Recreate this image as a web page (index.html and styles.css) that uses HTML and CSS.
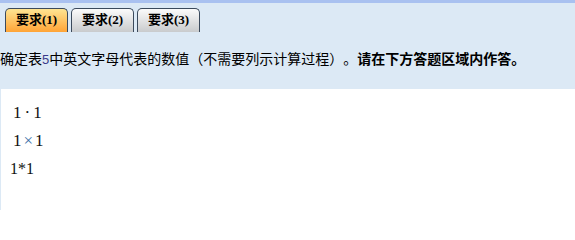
FILE: index.html
```html
<!DOCTYPE html>
<html>
<head>
<meta charset="utf-8">
<link rel="stylesheet" href="styles.css">
</head>
<body>
<div class="topbar"></div>
<div class="header">
  <div class="tabs">
    <div class="tab active">要求<span class="paren">(1)</span></div>
    <div class="tab">要求<span class="paren">(2)</span></div>
    <div class="tab">要求<span class="paren">(3)</span></div>
  </div>
  <p class="question">确定表<span class="num">5</span>中英文字母代表的数值（不需要列示计算过程）。<b>请在下方答题区域内作答。</b></p>
</div>
<div class="answer">
  <div class="math">1<span class="op">·</span>1</div>
  <div class="math">1<span class="op times">×</span>1</div>
  <div class="plain">1*1</div>
</div>
</body>
</html>
```

FILE: styles.css
```css
html, body {
  margin: 0;
  padding: 0;
  background: #ffffff;
}
body {
  width: 575px;
  height: 210px;
  background: #dce9f5;
  font-family: "Liberation Serif", "Noto Sans CJK SC", serif;
  overflow: hidden;
}
.topbar {
  height: 3px;
  background: #a9c1f0;
}
.header {
  height: 86px;
  display: flex;
  flex-direction: column;
}
.tabs {
  display: flex;
  gap: 3px;
  padding: 5px 0 0 5px;
}
.tab {
  width: 61px;
  height: 23px;
  border: 1px solid #3b4a5c;
  border-bottom: none;
  border-radius: 5px 5px 0 0;
  background: linear-gradient(#fbfbfb, #c9cbcd);
  font-family: "Noto Sans CJK SC", sans-serif;
  font-weight: bold;
  font-size: 13px;
  line-height: 20px;
  text-align: center;
  color: #000;
}
.tab .paren {
  font-family: "Liberation Serif", serif;
  font-size: 13px;
}
.tab.active {
  background: linear-gradient(#ffe592, #ffa436);
}
.question {
  margin: 16px 0 0 0;
  font-family: "Noto Sans CJK SC", sans-serif;
  font-size: 14px;
  line-height: 20px;
  color: #000;
  text-spacing-trim: space-all;
}
.question .num {
  font-family: "Liberation Sans", sans-serif;
  font-size: 13px;
  color: #3a3a8a;
}
.answer {
  margin-left: 1px;
  height: 121px;
  background: #ffffff;
  padding-top: 10px;
  box-sizing: border-box;
}
.math {
  font-family: "Liberation Serif", serif;
  font-size: 17px;
  line-height: 28px;
  padding-left: 12px;
  color: #111;
}
.op {
  margin: 0 3px;
}
.op.times {
  margin: 0 2px;
  color: #3b6fa8;
}
.plain {
  font-family: "Liberation Serif", serif;
  font-size: 16px;
  line-height: 28px;
  padding-left: 9px;
  color: #111;
}
```
